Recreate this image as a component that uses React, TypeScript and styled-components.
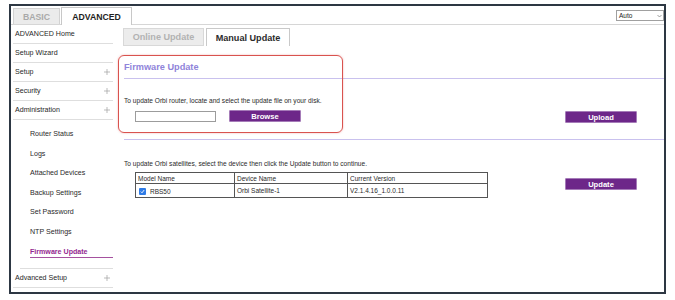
import { createGlobalStyle, styled } from "styled-components";

const GlobalStyle = createGlobalStyle`
    body {
        margin: 0;
        background: #ffffff;
        font-family: "Liberation Sans", Arial, sans-serif;
        color: #222;
    }
`;

const Frame = styled.div`
    box-sizing: border-box;
    width: 657px;
    height: 290px;
    margin: 4px 0 0 9px;
    border: 2px solid #2d3743;
    overflow: hidden;
    display: flex;
    flex-direction: column;
    background: #fff;
`;

const TopBar = styled.div`
    display: flex;
    align-items: flex-end;
    height: 18px;
    padding-left: 2px;
    border-bottom: 1px solid #d6d6d6;
`;

const ModeTab = styled.div<{ $active?: boolean }>`
    box-sizing: border-box;
    display: flex;
    align-items: center;
    justify-content: center;
    width: ${(p) => (p.$active ? "71px" : "47px")};
    height: ${(p) => (p.$active ? "18px" : "16px")};
    margin-bottom: ${(p) => (p.$active ? "-1px" : "0")};
    margin-left: ${(p) => (p.$active ? "1px" : "0")};
    border: 1px solid ${(p) => (p.$active ? "#c8c8c8" : "#d2d2d2")};
    border-bottom: none;
    background: ${(p) => (p.$active ? "#fff" : "#ebebeb")};
    color: ${(p) => (p.$active ? "#1e1e1e" : "#a9a9a9")};
    font-size: 8.7px;
    font-weight: 700;
    padding-top: 1px;
`;

const LangSelect = styled.div`
    box-sizing: border-box;
    align-self: flex-start;
    margin: 4px 0 0 auto;
    width: 48px;
    height: 11px;
    flex-shrink: 0;
    border: 1px solid #a0a0a0;
    display: flex;
    align-items: center;
    justify-content: space-between;
    padding: 0 1px 0 2px;
    font-size: 6.5px;
    color: #222;
`;

const Body = styled.div`
    display: flex;
    flex: 1;
    min-height: 0;
`;

const Sidebar = styled.div`
    width: 102px;
    flex-shrink: 0;
    display: flex;
    flex-direction: column;
    font-size: 7.1px;
`;

const NavRow = styled.div`
    box-sizing: border-box;
    height: 19px;
    margin-left: 2px;
    padding: 0 3px 0 2px;
    display: flex;
    align-items: center;
    justify-content: space-between;
    border-bottom: 1px solid #dedede;
    color: #1f1f1f;
`;

const SubList = styled.div`
    padding-top: 4.5px;
`;

const SubItem = styled.div<{ $active?: boolean }>`
    height: 19.5px;
    padding-left: 19px;
    display: flex;
    align-items: ${(p) => (p.$active ? "flex-start" : "center")};
    box-sizing: border-box;
    padding-top: ${(p) => (p.$active ? "6px" : "0")};
    color: ${(p) => (p.$active ? "#93288f" : "#2a2a2a")};
    font-weight: ${(p) => (p.$active ? 700 : 400)};
`;

const ActiveLabel = styled.span`
    display: block;
    width: 100%;
    line-height: 9px;
    border-bottom: 1px solid #a5519f;
`;

const Divider = styled.div<{ $inset: number }>`
    margin: 7px 0 0 ${(p) => p.$inset}px;
    border-top: 1px solid #dedede;
`;

const Main = styled.div`
    position: relative;
    flex: 1;
    min-width: 0;
    display: flex;
    flex-direction: column;
`;

const SubTabs = styled.div`
    display: flex;
    gap: 2px;
    padding: 3px 0 0 10px;
`;

const SubTab = styled.div<{ $active?: boolean }>`
    box-sizing: border-box;
    width: ${(p) => (p.$active ? "84px" : "81px")};
    height: 18px;
    display: flex;
    align-items: center;
    justify-content: center;
    border: 1px solid ${(p) => (p.$active ? "#c9c9c9" : "#d8d8d8")};
    border-bottom: ${(p) => (p.$active ? "none" : "1px solid #d8d8d8")};
    background: ${(p) => (p.$active ? "#fff" : "#ececec")};
    color: ${(p) => (p.$active ? "#2b2b2b" : "#b2b2b2")};
    font-size: 9.1px;
    font-weight: 700;
`;

// red annotation frame drawn over the router upload block
const Highlight = styled.div`
    position: absolute;
    left: 5px;
    top: 30px;
    width: 225px;
    height: 78px;
    box-sizing: border-box;
    border: 1.5px solid #d9534f;
    border-radius: 6px;
    box-shadow: 0 0 2px rgba(230, 110, 110, 0.55);
    pointer-events: none;
`;

const Section = styled.div`
    padding-left: 11px;
    display: flex;
    flex-direction: column;
`;

const SectionTitle = styled.div`
    margin-top: 15px;
    line-height: 12px;
    padding-bottom: 5px;
    border-bottom: 1.5px solid #c9c1ee;
    color: #8f84da;
    font-size: 9.2px;
    font-weight: 700;
`;

const Note = styled.div<{ $top: number }>`
    margin-top: ${(p) => p.$top}px;
    line-height: 9px;
    font-size: 6.6px;
    color: #2a2a2a;
`;

const ActionRow = styled.div<{ $top: number }>`
    display: flex;
    align-items: flex-start;
    margin-top: ${(p) => p.$top}px;
    padding-left: 11px;
`;

const FileInput = styled.div`
    box-sizing: border-box;
    width: 81px;
    height: 11px;
    margin-top: 1px;
    border: 1px solid #9c9c9c;
    background: #fff;
`;

const PurpleButton = styled.div<{ $push?: boolean; $offset?: number }>`
    box-sizing: border-box;
    width: 72px;
    height: 12px;
    margin-left: ${(p) => (p.$push ? "auto" : "13px")};
    margin-right: ${(p) => (p.$push ? "27px" : "0")};
    margin-top: ${(p) => p.$offset ?? 0}px;
    display: flex;
    align-items: center;
    justify-content: center;
    background: #6d2789;
    border: 1px solid #a57bb8;
    border-radius: 1px;
    color: #fff;
    font-size: 7.6px;
    font-weight: 700;
`;

const Rule = styled.div`
    margin-top: 16px;
    border-top: 1.5px solid #c9c1ee;
`;

const DeviceTable = styled.table`
    border-collapse: collapse;
    font-size: 6.5px;
    color: #2a2a2a;
    width: 337px;
    table-layout: fixed;
`;

const HeadCell = styled.td<{ $w: number }>`
    width: ${(p) => p.$w}px;
    height: 10px;
    padding: 0 2px;
    border: 1px solid #555;
    line-height: 9px;
`;

const Cell = styled.td`
    height: 13px;
    padding: 0 2px;
    border: 1px solid #555;
    line-height: 9px;
`;

const CheckWrap = styled.span`
    display: inline-flex;
    align-items: center;
    gap: 4px;
    padding-left: 1px;
    padding-top: 2px;
`;

const Check = styled.span`
    width: 7px;
    height: 7px;
    border-radius: 1px;
    background: #2f7be6;
    display: inline-flex;
    align-items: center;
    justify-content: center;
`;

const Plus = () => (
    <svg width="6" height="6" viewBox="0 0 6 6">
        <path d="M3 0v6M0 3h6" stroke="#9d9d9d" strokeWidth="0.7" fill="none" />
    </svg>
);

const subItems = [
    "Router Status",
    "Logs",
    "Attached Devices",
    "Backup Settings",
    "Set Password",
    "NTP Settings",
];

const App: React.FC = () => {
    return (
        <>
            <GlobalStyle />
            <Frame>
                <TopBar>
                    <ModeTab>BASIC</ModeTab>
                    <ModeTab $active>ADVANCED</ModeTab>
                    <LangSelect>
                        Auto
                        <svg width="5" height="4" viewBox="0 0 5 4">
                            <path d="M0.5 1l2 2 2-2" stroke="#777" strokeWidth="0.7" fill="none" />
                        </svg>
                    </LangSelect>
                </TopBar>
                <Body>
                    <Sidebar>
                        <NavRow>ADVANCED Home</NavRow>
                        <NavRow>Setup Wizard</NavRow>
                        <NavRow>Setup<Plus /></NavRow>
                        <NavRow>Security<Plus /></NavRow>
                        <NavRow>Administration<Plus /></NavRow>
                        <SubList>
                            {subItems.map((item) => (
                                <SubItem key={item}>{item}</SubItem>
                            ))}
                            <SubItem $active>
                                <ActiveLabel>Firmware Update</ActiveLabel>
                            </SubItem>
                        </SubList>
                        <Divider $inset={9} />
                        <NavRow>Advanced Setup<Plus /></NavRow>
                    </Sidebar>
                    <Main>
                        <SubTabs>
                            <SubTab>Online Update</SubTab>
                            <SubTab $active>Manual Update</SubTab>
                        </SubTabs>
                        <Section>
                            <SectionTitle>Firmware Update</SectionTitle>
                            <Note $top={17}>To update Orbi router, locate and select the update file on your disk.</Note>
                            <ActionRow $top={5}>
                                <FileInput />
                                <PurpleButton>Browse</PurpleButton>
                                <PurpleButton $push $offset={1}>Upload</PurpleButton>
                            </ActionRow>
                            <Rule />
                            <Note $top={19}>To update Orbi satellites, select the device then click the Update button to continue.</Note>
                            <ActionRow $top={4}>
                                <DeviceTable>
                                    <tbody>
                                        <tr>
                                            <HeadCell $w={94}>Model Name</HeadCell>
                                            <HeadCell $w={108}>Device Name</HeadCell>
                                            <HeadCell $w={135}>Current Version</HeadCell>
                                        </tr>
                                        <tr>
                                            <Cell>
                                                <CheckWrap>
                                                    <Check>
                                                        <svg width="5" height="5" viewBox="0 0 5 5">
                                                            <path d="M0.8 2.6l1.2 1.2 2.2-2.8" stroke="#fff" strokeWidth="0.9" fill="none" />
                                                        </svg>
                                                    </Check>
                                                    RBS50
                                                </CheckWrap>
                                            </Cell>
                                            <Cell>Orbi Satellite-1</Cell>
                                            <Cell>V2.1.4.16_1.0.0.11</Cell>
                                        </tr>
                                    </tbody>
                                </DeviceTable>
                                <PurpleButton $push $offset={6}>Update</PurpleButton>
                            </ActionRow>
                        </Section>
                        <Highlight />
                    </Main>
                </Body>
            </Frame>
        </>
    );
};

export default App;
